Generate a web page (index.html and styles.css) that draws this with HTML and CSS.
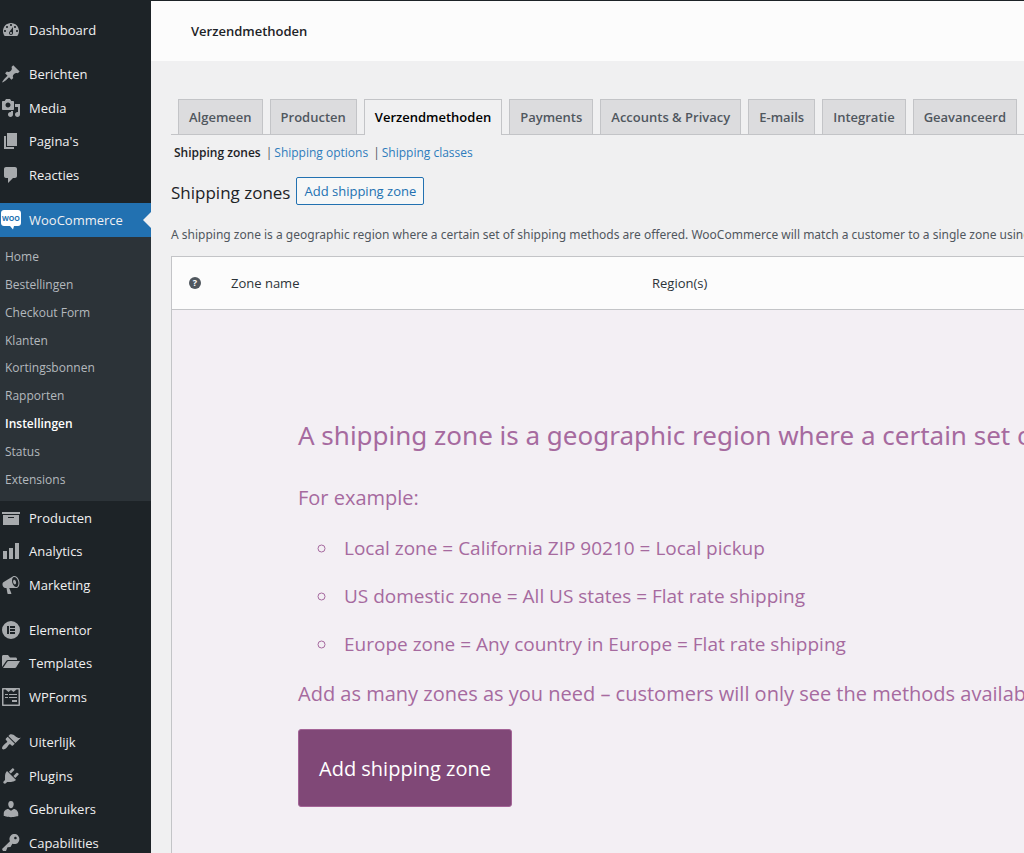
FILE: index.html
```
<!DOCTYPE html>
<html lang="nl">
<head>
  <meta charset="UTF-8">
  <meta name="viewport" content="width=device-width, initial-scale=1.0">
  <title>Verzendmethoden</title>
  <link rel="stylesheet" href="styles.css">
</head>
<body>
  <div class="wrap">
    <nav class="sidebar" aria-label="Hoofdmenu">
      <ul class="menu">
        <li><a href="#"><svg class="icon" viewBox="0 0 20 20"><path d="M3.76 16h12.48c1.1-1.37 1.76-3.11 1.76-5 0-4.42-3.58-8-8-8s-8 3.58-8 8c0 1.89.66 3.63 1.76 5zM10 4c.55 0 1 .45 1 1s-.45 1-1 1-1-.45-1-1 .45-1 1-1zM6 6c.55 0 1 .45 1 1s-.45 1-1 1-1-.45-1-1 .45-1 1-1zm8 0c.55 0 1 .45 1 1s-.45 1-1 1-1-.45-1-1 .45-1 1-1zm-5.37 5.55L12 7v6c0 1.1-.9 2-2 2s-2-.9-2-2c0-.57.24-1.08.63-1.45zM4 10c.55 0 1 .45 1 1s-.45 1-1 1-1-.45-1-1 .45-1 1-1zm12 0c.55 0 1 .45 1 1s-.45 1-1 1-1-.45-1-1 .45-1 1-1zm-5 3c0-.55-.45-1-1-1s-1 .45-1 1 .45 1 1 1 1-.45 1-1z"/></svg>Dashboard</a></li>
      </ul>
      <ul class="menu menu-four">
        <li><a href="#"><svg class="icon" viewBox="0 0 20 20"><path d="M10.44 3.02l1.82-1.82 6.36 6.35-1.83 1.82c-1.05-.68-2.48-.57-3.41.36l-.75.75c-.92.93-1.04 2.35-.35 3.41l-1.83 1.82-2.41-2.41-2.8 2.79c-.42.42-3.38 2.71-3.8 2.29s1.86-3.39 2.28-3.81l2.79-2.79L4.1 9.36l1.83-1.82c1.05.69 2.48.57 3.4-.36l.75-.75c.93-.92 1.05-2.35.36-3.41z"/></svg>Berichten</a></li>
        <li><a href="#"><svg class="icon" viewBox="0 0 20 20"><path d="M13 11V4c0-.55-.45-1-1-1h-1.67L9 1H5L3.67 3H2c-.55 0-1 .45-1 1v7c0 .55.45 1 1 1h10c.55 0 1-.45 1-1zM7 4.5c1.38 0 2.5 1.12 2.5 2.5S8.38 9.5 7 9.5 4.5 8.38 4.5 7 5.62 4.5 7 4.5zM14 6h5v10.5c0 1.38-1.12 2.5-2.5 2.5S14 17.88 14 16.5s1.12-2.5 2.5-2.5c.17 0 .34.02.5.05V9h-3V6zm-4 8.05V13h2v3.5c0 1.38-1.12 2.5-2.5 2.5S7 17.88 7 16.5 8.12 14 9.5 14c.17 0 .34.02.5.05z"/></svg>Media</a></li>
        <li><a href="#"><svg class="icon" viewBox="0 0 20 20"><path d="M6 15V2h10v13H6zm-1 1h8v2H3V5h2v11z"/></svg>Pagina's</a></li>
        <li><a href="#"><svg class="icon" viewBox="0 0 20 20"><path d="M5 2h9c1.1 0 2 .9 2 2v7c0 1.1-.9 2-2 2h-2l-5 5v-5H5c-1.1 0-2-.9-2-2V4c0-1.1.9-2 2-2z"/></svg>Reacties</a></li>
      </ul>
      <ul class="menu menu-shop">
        <li class="current"><a href="#"><svg class="icon" viewBox="0 0 20 20"><path d="M3 0h14c1.700 0 3 1.300 3 3v10c0 1.700-1.300 3-3 3h-4l-1 3.500L9 16H3c-1.700 0-3-1.300-3-3V3c0-1.700 1.300-3 3-3z"/><text class="woo" x="10" y="11" text-anchor="middle">WOO</text></svg>WooCommerce</a></li>
      </ul>
      <ul class="submenu">
        <li><a href="#">Home</a></li>
        <li><a href="#">Bestellingen</a></li>
        <li><a href="#">Checkout Form</a></li>
        <li><a href="#">Klanten</a></li>
        <li><a href="#">Kortingsbonnen</a></li>
        <li><a href="#">Rapporten</a></li>
        <li><a href="#" class="active">Instellingen</a></li>
        <li><a href="#">Status</a></li>
        <li><a href="#">Extensions</a></li>
      </ul>
      <ul class="menu menu-three">
        <li><a href="#"><svg class="icon" viewBox="0 0 20 20"><path d="M19 4v2H1V4h18zM2 7h16v10H2V7zm11 3V9H7v1h6z"/></svg>Producten</a></li>
        <li><a href="#"><svg class="icon" viewBox="0 0 20 20"><path d="M18 18V2h-4v16h4zm-6 0V7H8v11h4zm-6 0v-8H2v8h4z"/></svg>Analytics</a></li>
        <li><a href="#"><svg class="icon" viewBox="0 0 20 20"><path d="M18.150 5.940c.46 1.620.38 3.220-.02 4.480-.42 1.280-1.260 2.180-2.300 2.480-.16.060-.26.060-.4.060-.06.020-.12.020-.18.020-.06.020-.14.020-.22.020h-6.800l2.220 5.500c.02.140-.06.260-.14.340-.08.100-.24.160-.34.160H6.950c-.1 0-.26-.06-.34-.16-.08-.08-.16-.2-.14-.34l-1-5.500H4.250l-.02-.02c-.5.060-1.080-.18-1.540-.62s-.88-1.080-1.060-1.880c-.24-.8-.2-1.560-.02-2.200.18-.62.58-1.080 1.060-1.300l.02-.02 9-5.400c.1-.06.18-.1.24-.16.06-.04.14-.08.24-.12.16-.08.28-.12.5-.18 1.040-.3 2.240.1 3.220.98s1.840 2.240 2.260 3.860zm-2.580 5.980h-.02c.4-.1.74-.34 1.040-.7.58-.7.86-1.760.86-3.040 0-.64-.1-1.300-.28-1.980-.34-1.360-1.020-2.500-1.780-3.240s-1.680-1.100-2.460-.88c-.82.220-1.400.96-1.700 2-.32 1.040-.28 2.360.06 3.720.38 1.360 1 2.500 1.800 3.240.78.740 1.620 1.100 2.480.88zm-2.540-7.080c.22-.04.42-.02.62.04.38.160.76.480 1.020 1s.42 1.200.42 1.780c0 .3-.04.560-.12.8-.18.480-.44.840-.86.940-.34.100-.8-.06-1.140-.4s-.64-.86-.78-1.500c-.18-.62-.12-1.240.02-1.720s.48-.84.82-.94z"/></svg>Marketing</a></li>
      </ul>
      <ul class="menu menu-three">
        <li><a href="#"><svg class="icon" viewBox="0 0 20 20"><path d="M10 1a9 9 0 1 0 0 18 9 9 0 0 0 0-18zM6 6h2v8H6V6zm3 0h5v2H9V6zm0 3h5v2H9V9zm0 3h5v2H9v-2z"/></svg>Elementor</a></li>
        <li><a href="#"><svg class="icon" viewBox="0 0 20 20"><path d="M1 14V3.500C1 2.600 1.600 2 2.500 2H7l2 2.500h5.500c.9 0 1.500.6 1.500 1.500v1H7c-.8 0-1.400.4-1.800 1L1 14zm1 1l4.200-6.200c.3-.5.700-.8 1.300-.8H19l-3.800 6.200c-.3.500-.7.800-1.300.8H2z"/></svg>Templates</a></li>
        <li><a href="#"><svg class="icon" viewBox="0 0 20 20"><path d="M2 1h16c.6 0 1 .4 1 1v16c0 .6-.4 1-1 1H2c-.6 0-1-.4-1-1V2c0-.6.4-1 1-1zm.5 1.500v15h15v-15h-2L12.500 5 10 3 7.500 5l-3-2.500h-2zM4 7h3v1H4V7zm4 0h8v1H8V7zm-4 3h3v1H4v-1zm4 0h8v1H8v-1zm3 3h5v2h-5v-2z"/></svg>WPForms</a></li>
      </ul>
      <ul class="menu menu-four">
        <li><a href="#"><svg class="icon" viewBox="0 0 20 20"><path d="M14.480 11.060L7.410 3.990l1.500-1.500c.5-.56 2.300-.47 3.510.32 1.210.8 1.430 1.280 2.910 2.100 1.180.64 2.450 1.260 4.450.85zm-.71.71L6.700 4.700 4.930 6.470c-.39.39-.39 1.020 0 1.410l1.060 1.060c.39.39.39 1.030 0 1.420-.6.6-1.430 1.110-2.210 1.690-.35.26-.7.530-1.010.84C1.430 14.230.4 16.080 1.400 17.070c.99 1 2.840-.03 4.180-1.360.31-.31.58-.66.85-1.020.57-.78 1.080-1.610 1.690-2.210.39-.39 1.020-.39 1.410 0l1.060 1.060c.39.39 1.020.39 1.410 0z"/></svg>Uiterlijk</a></li>
        <li><a href="#"><svg class="icon" viewBox="0 0 20 20"><path d="M13.110 4.360L9.870 7.600 8 5.730l3.240-3.240c.35-.34 1.050-.2 1.560.32.52.51.66 1.210.31 1.550zm-8 1.770l.91-1.120 9.010 9.010-1.190.84c-.71.71-2.630 1.160-3.820 1.160H6.140L4.900 17.260c-.59.59-1.540.59-2.120 0-.59-.58-.59-1.530 0-2.120l1.240-1.240v-3.880c0-1.130.4-3.190 1.090-3.890zm7.260 3.970l3.240-3.240c.34-.35 1.040-.21 1.550.31.52.51.66 1.210.31 1.550l-3.240 3.250z"/></svg>Plugins</a></li>
        <li><a href="#"><svg class="icon" viewBox="0 0 20 20"><path d="M10 9.250c-2.270 0-2.730-3.440-2.730-3.440C7 4.020 7.820 2 9.970 2c2.160 0 2.980 2.020 2.710 3.810 0 0-.41 3.440-2.680 3.440zm0 2.570L12.720 10c2.390 0 4.520 2.330 4.520 4.530v2.490s-3.650 1.130-7.240 1.130c-3.650 0-7.240-1.130-7.240-1.130v-2.490c0-2.250 1.940-4.480 4.470-4.480z"/></svg>Gebruikers</a></li>
        <li><a href="#"><svg class="icon" viewBox="0 0 20 20"><path d="M16.950 2.580c1.960 1.950 1.960 5.120 0 7.070-1.510 1.510-3.750 1.840-5.590 1.010l-1.870 3.310-2.990.31L5 18H2l-1-2 7.950-7.690c-.92-1.870-.62-4.180.93-5.730 1.950-1.960 5.120-1.960 7.070 0zm-2.510 3.790c.74 0 1.330-.6 1.330-1.340 0-.73-.59-1.330-1.330-1.330-.73 0-1.330.6-1.330 1.330 0 .74.6 1.340 1.330 1.340z"/></svg>Capabilities</a></li>
      </ul>
    </nav>

    <main class="main">
      <header class="topbar">
        <h1>Verzendmethoden</h1>
      </header>

      <div class="content">
        <nav class="tabs" aria-label="Instellingen">
          <a href="#">Algemeen</a>
          <a href="#">Producten</a>
          <a href="#" class="active">Verzendmethoden</a>
          <a href="#">Payments</a>
          <a href="#">Accounts &amp; Privacy</a>
          <a href="#">E-mails</a>
          <a href="#">Integratie</a>
          <a href="#">Geavanceerd</a>
        </nav>

        <ul class="subnav">
          <li><a href="#" class="active">Shipping zones</a></li>
          <li><a href="#">Shipping options</a></li>
          <li><a href="#">Shipping classes</a></li>
        </ul>

        <div class="title">
          <h2>Shipping zones</h2>
          <button type="button" class="btn">Add shipping zone</button>
        </div>

        <p class="intro">A shipping zone is a geographic region where a certain set of shipping methods are offered. WooCommerce will match a customer to a single zone using</p>

        <table class="zones">
          <thead>
            <tr>
              <th class="col-sort"><span class="help">?</span></th>
              <th class="col-name">Zone name</th>
              <th>Region(s)</th>
            </tr>
          </thead>
          <tbody>
            <tr>
              <td colspan="3" class="blank">
                <p class="lead">A shipping zone is a geographic region where a certain set of</p>
                <p>For example:</p>
                <ul>
                  <li>Local zone = California ZIP 90210 = Local pickup</li>
                  <li>US domestic zone = All US states = Flat rate shipping</li>
                  <li>Europe zone = Any country in Europe = Flat rate shipping</li>
                </ul>
                <p>Add as many zones as you need – customers will only see the methods available</p>
                <button type="button" class="btn-big">Add shipping zone</button>
              </td>
            </tr>
          </tbody>
        </table>
      </div>
    </main>
  </div>
</body>
</html>
```
FILE: styles.css
```
* {
  box-sizing: border-box;
}
body {
  margin: 0;
  font-family: "Open Sans", "Noto Sans", sans-serif;
  font-size: 13px;
  color: #3c434a;
  background: #f0f0f1;
  border-top: 1px solid #1d2327;
}
a {
  text-decoration: none;
}
ul {
  list-style: none;
  margin: 0;
  padding: 0;
}
.wrap {
  display: flex;
  height: calc(100vh - 1px);
  overflow: hidden;
}

/* sidebar */
.sidebar {
  width: 151px;
  flex-shrink: 0;
  background: #1d2327;
  padding-top: 12px;
}
.menu {
  display: grid;
  grid-auto-rows: 1fr;
  height: 34px;
  margin-bottom: 11px;
}
.menu:first-child {
  margin-bottom: 10px;
}
.menu-three {
  height: 101px;
}
.menu-four {
  height: 135px;
}
.menu-shop {
  margin-bottom: 0;
}
.menu a {
  display: flex;
  align-items: center;
  gap: 8px;
  height: 100%;
  padding-left: 1px;
  color: #f0f0f1;
}
.icon {
  width: 20px;
  height: 20px;
  flex-shrink: 0;
  fill: #a7aaad;
  fill-rule: evenodd;
}
.current {
  position: relative;
  background: #2271b1;
}
.current .icon {
  fill: #fff;
}
.current .woo {
  fill: #2271b1;
  font-size: 7px;
  font-weight: 700;
}
.current::after {
  content: "";
  position: absolute;
  right: 0;
  top: 9px;
  border: 8px solid transparent;
  border-right-color: #f0f0f1;
  border-left: 0;
}
.submenu {
  display: grid;
  grid-auto-rows: 1fr;
  align-items: center;
  height: 264px;
  padding: 6px 5px 8px;
  background: #2c3338;
  font-size: 12px;
}
.submenu a {
  color: #b4b9be;
}
.submenu a.active {
  color: #fff;
  font-weight: 600;
}

/* content */
.main {
  flex: 1;
  min-width: 0;
  overflow: hidden;
}
.topbar {
  display: flex;
  align-items: center;
  height: 60px;
  padding-left: 40px;
  background: #fcfcfc;
}
.topbar h1 {
  margin: 0;
  font-size: 13px;
  font-weight: 600;
  color: #1d2327;
}
.content {
  padding: 38px 0 0 20px;
  white-space: nowrap;
}
.tabs {
  display: flex;
  gap: 7px;
  padding-left: 7px;
  border-bottom: 1px solid #c3c4c7;
}
.tabs a {
  padding: 0 10px;
  border: 1px solid #c3c4c7;
  border-bottom: 0;
  background: #dcdcde;
  color: #50575e;
  font-weight: 600;
  line-height: 34px;
}
.tabs a.active {
  margin-bottom: -1px;
  padding-bottom: 1px;
  background: #f0f0f1;
  color: #000;
}
.subnav {
  display: flex;
  padding: 8px 0 0 3px;
  font-size: 12px;
  line-height: 20px;
}
.subnav li + li::before {
  content: "|";
  margin: 0 2px 0 5px;
  color: #50575e;
}
.subnav a {
  color: #2e7cbc;
}
.subnav a.active {
  color: #1d2327;
  font-weight: 600;
}
.title {
  display: flex;
  align-items: center;
  gap: 6px;
  margin-top: 14px;
}
.title h2 {
  margin: 4px 0 0;
  font-size: 17px;
  font-weight: 400;
  line-height: 24px;
  color: #1d2327;
}
.btn {
  height: 28px;
  padding: 0 7px;
  border: 1px solid #2271b1;
  border-radius: 2px;
  background: #f6f7f7;
  color: #2271b1;
  font: inherit;
}
.intro {
  margin: 20px 0 11px;
  font-family: "Noto Sans", "Open Sans", sans-serif;
  font-size: 12px;
  line-height: 20px;
  color: #50575e;
}
.zones {
  width: 120%;
  border: 1px solid #c3c4c7;
  border-spacing: 0;
  table-layout: fixed;
}
.zones th {
  height: 53px;
  padding: 0 0 0 17px;
  border-bottom: 1px solid #c3c4c7;
  background: #fcfcfc;
  color: #2c3338;
  font-weight: 400;
  text-align: left;
}
.zones .col-sort {
  width: 42px;
}
.zones .col-name {
  width: 421px;
}
.help {
  display: block;
  width: 12px;
  height: 12px;
  border-radius: 50%;
  background: #50575e;
  color: #fff;
  font-size: 9px;
  font-weight: 700;
  line-height: 12px;
  text-align: center;
}
.blank {
  height: 600px;
  padding: 105px 0 0 126px;
  background: #f3eff4;
  color: #a66a9f;
  font-size: 20px;
  vertical-align: top;
}
.blank p {
  margin: 0 0 20px;
  line-height: 30px;
}
.blank .lead {
  margin-bottom: 28px;
  font-family: "Noto Sans", "Open Sans", sans-serif;
  font-size: 26px;
  line-height: 40px;
}
.blank ul {
  margin-bottom: 20px;
  padding-left: 40px;
  list-style: circle;
  font-size: 19px;
}
.blank li {
  margin-bottom: 18px;
  padding-left: 6px;
  line-height: 30px;
}
.blank li:last-child {
  margin-bottom: 0;
}
.btn-big {
  height: 78px;
  padding: 0 20px;
  border: 1px solid #a46497;
  border-radius: 3px;
  background: #804877;
  color: #fff;
  font: inherit;
}
```
